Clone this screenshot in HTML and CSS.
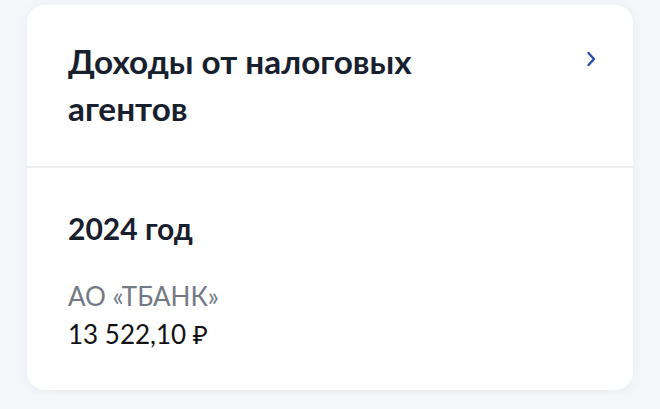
FILE: index.html
```html
<!DOCTYPE html>
<html>
<head>
	<title>Доходы от налоговых агентов</title>
	<link rel="stylesheet" href="styles.css">
</head>
<body>
	<div class="card">
		<div class="card-head">
			<h2 class="card-title">Доходы от налоговых агентов</h2>
			<svg class="chevron" width="12" height="18" viewBox="0 0 12 18">
				<path d="M3.5 3 L9 9 L3.5 15" fill="none" stroke="#2d4ab5" stroke-width="2.4" stroke-linecap="round" stroke-linejoin="round"/>
			</svg>
		</div>
		<div class="card-body">
			<div class="year">2024 год</div>
			<div class="agent">АО «ТБАНК»</div>
			<div class="amount">13 522,10 ₽</div>
		</div>
	</div>
</body>
</html>
```

FILE: styles.css
```css
body {
	margin: 0;
	padding: 5px 27px;
	background: #f4f6fa;
	font-family: Lato, "Noto Sans", sans-serif;
}

.card {
	background: #fff;
	border-radius: 18px;
	box-shadow: 0 2px 12px rgba(40, 60, 100, 0.06);
	overflow: hidden;
}

.card-head {
	display: flex;
	justify-content: space-between;
	align-items: flex-start;
	padding: 33px 36px 34px 41px;
	border-bottom: 2px solid #eceef2;
}

.card-title {
	margin: 0;
	width: 420px;
	font-size: 33.3px;
	line-height: 47px;
	font-weight: 700;
	color: #18202e;
}

.chevron {
	margin-top: 12px;
}

.card-body {
	padding: 40px 41px 39px;
}

.year {
	font-size: 30px;
	line-height: 40px;
	font-weight: 700;
	color: #18202e;
	margin-bottom: 31px;
}

.agent {
	font-size: 26px;
	line-height: 34px;
	color: #737a84;
	margin-bottom: 4px;
}

.amount {
	font-size: 26px;
	line-height: 34px;
	color: #111;
}
```
